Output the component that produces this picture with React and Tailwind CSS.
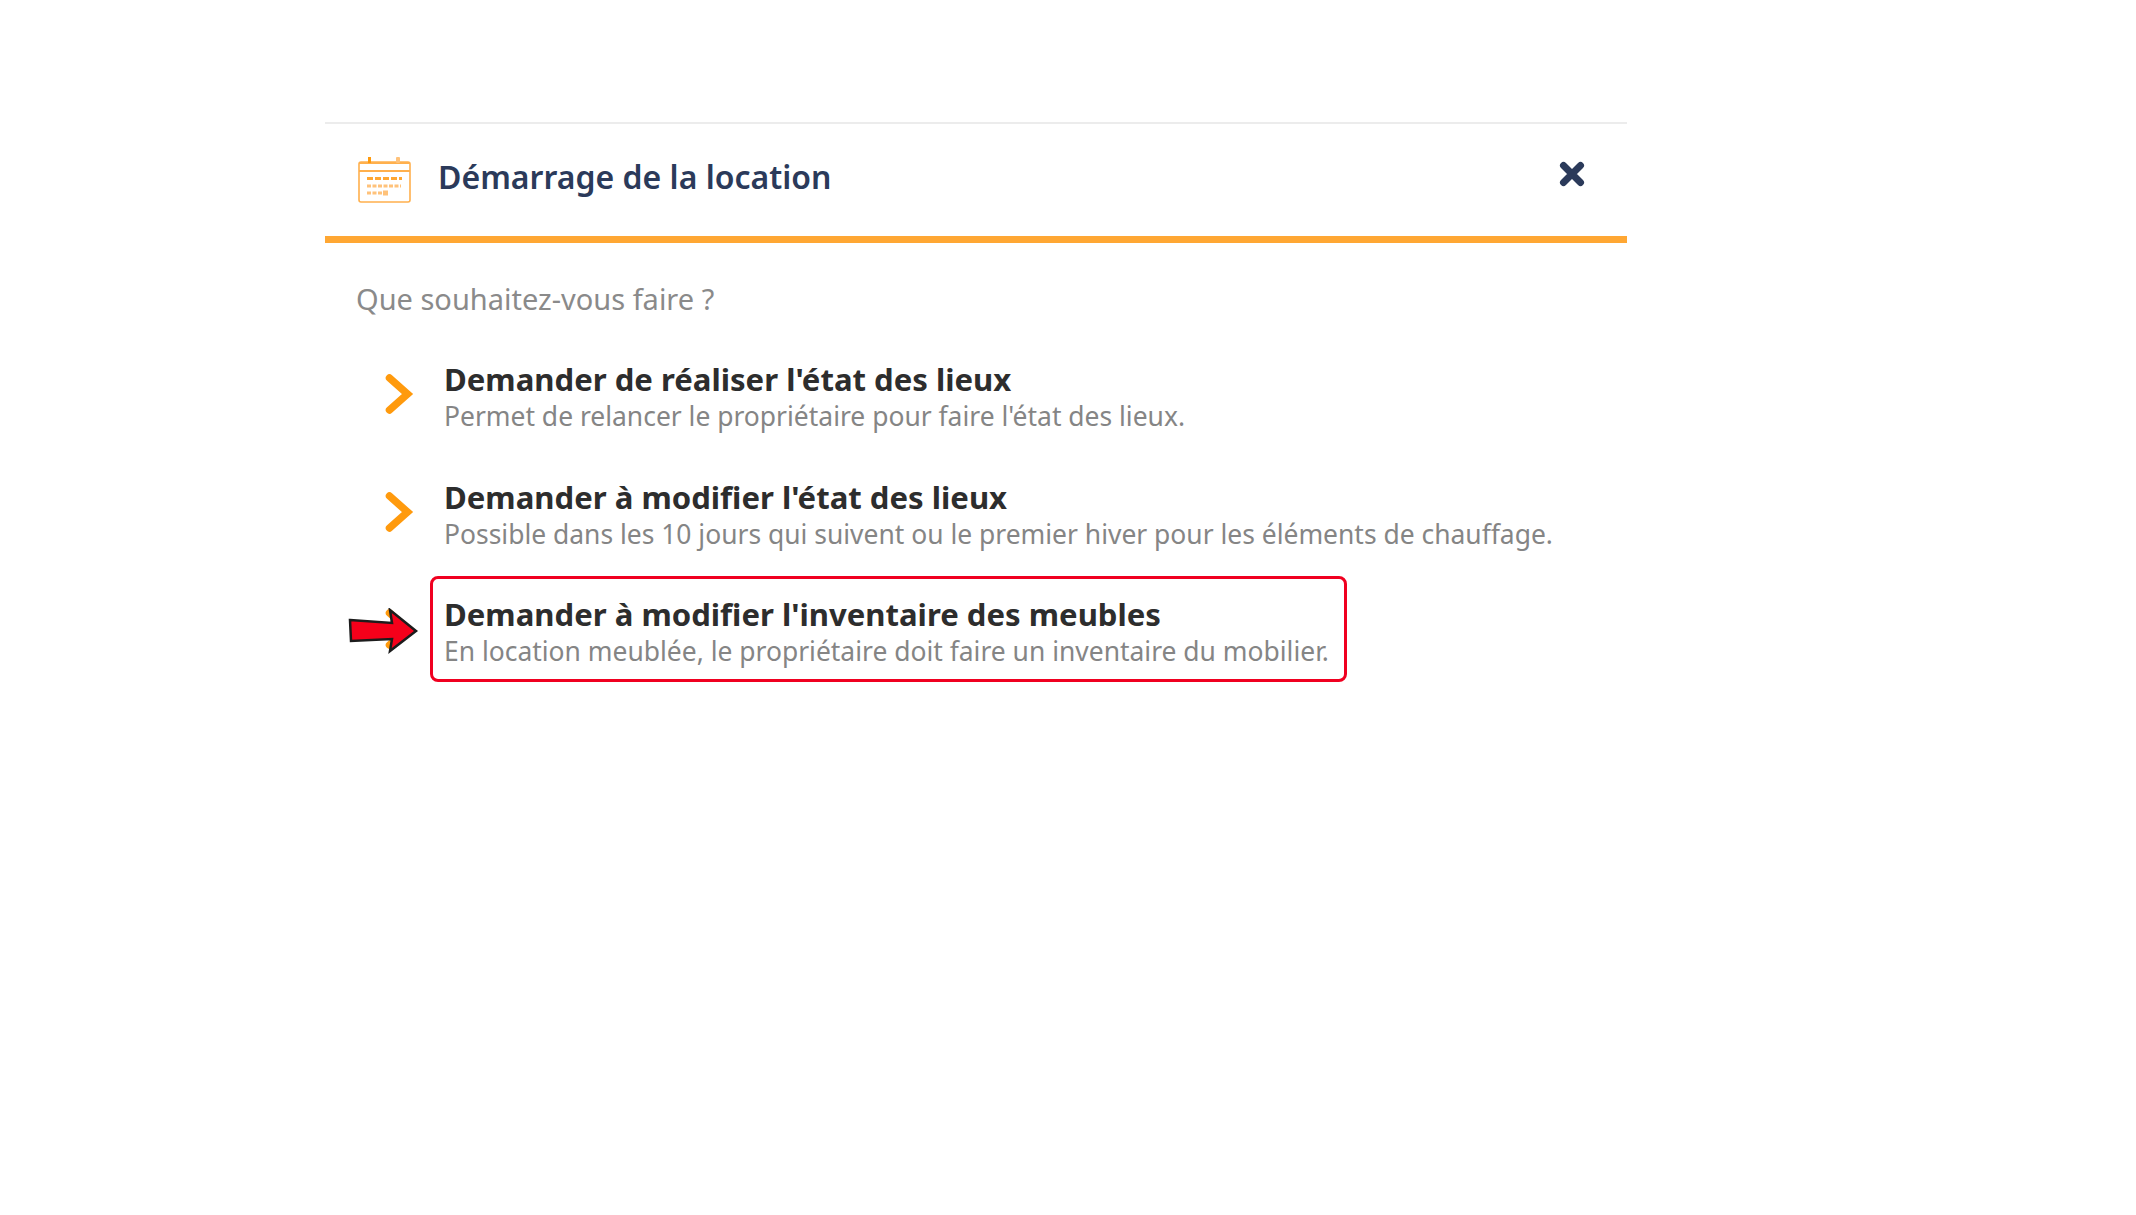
import React from "react";

const font = { fontFamily: '"Noto Sans", sans-serif' };

const Chevron = () => (
  <svg width="30" height="42" viewBox="0 0 30 42" className="shrink-0">
    <path d="M5.5 5 L23.5 21 L5.5 37" fill="none" stroke="#ff9a0d" strokeWidth="7.5" strokeLinejoin="miter" strokeLinecap="round" />
  </svg>
);

const CalendarIcon = () => (
  <svg width="54" height="46" viewBox="0 0 54 46" className="shrink-0">
    <rect x="1" y="5" width="51" height="40" rx="2" fill="#fff" stroke="#ffb04d" strokeWidth="1.6" />
    <path d="M1 14 H52" stroke="#ffb04d" strokeWidth="1.8" />
    <rect x="1" y="5" width="51" height="2" fill="#ffb04d" />
    <rect x="10" y="0" width="3" height="6" fill="#ff9a0d" />
    <rect x="38" y="0" width="4" height="6" rx="1" fill="#ffc27a" />
    <path d="M9 21.5 H44" stroke="#ffa733" strokeWidth="3" strokeDasharray="6 2" />
    <path d="M9 29 H43" stroke="#ffc27a" strokeWidth="3" strokeDasharray="4 1.5" fill="none" />
    <path d="M9 36 H26" stroke="#ffc27a" strokeWidth="3" strokeDasharray="4 1.5" fill="none" />
    <rect x="25" y="33.5" width="5" height="5" fill="#ffc27a" />
  </svg>
);

const CloseIcon = () => (
  <svg width="26" height="26" viewBox="0 0 26 26">
    <path d="M4.5 4.5 L21.5 21.5 M21.5 4.5 L4.5 21.5" stroke="#2b3a5a" strokeWidth="7" strokeLinecap="round" />
  </svg>
);

const RedArrow = () => (
  <svg width="72" height="46" viewBox="0 0 72 46">
    <path d="M2 12 L44 15 L42 2 L68 23 L42 43 L44 31 L3 33 Z" fill="#f5001a" stroke="#1c1c1c" strokeWidth="2.5" strokeLinejoin="miter" />
  </svg>
);

const Option = ({ title, text }) => (
  <div className="flex items-center">
    <div className="w-[56px] flex justify-start mb-[6px]">
      <Chevron />
    </div>
    <div className="pl-[4px]">
      <div className="text-[31.1px] leading-[36px] font-bold text-[#2d2d2d]">{title}</div>
      <div className="mt-[2px] text-[26.45px] leading-[34px] text-[#858585]">{text}</div>
    </div>
  </div>
);

export default function App() {
  return (
    <div className="min-h-screen bg-white pt-[122px] pl-[325px]" style={font}>
      <div className="w-[1302px]">
        <div className="h-[121px] border-t-2 border-b-[7px] border-t-[#ececec] border-b-[#ffa733] flex items-center pl-[33px] pr-[42px]">
          <CalendarIcon />
          <div className="ml-[26px] text-[32px] font-semibold text-[#2b3a5a] leading-none pb-[6px]">
            Démarrage de la location
          </div>
          <div className="ml-auto pb-[12px]">
            <CloseIcon />
          </div>
        </div>
        <div className="pl-[31px] pt-[36px]">
          <div className="text-[29px] leading-[40px] text-[#8a8a8a]">Que souhaitez-vous faire ?</div>
          <div className="pl-[28px] pt-[42px] flex flex-col gap-[46px]">
            <Option
              title="Demander de réaliser l'état des lieux"
              text="Permet de relancer le propriétaire pour faire l'état des lieux."
            />
            <Option
              title="Demander à modifier l'état des lieux"
              text="Possible dans les 10 jours qui suivent ou le premier hiver pour les éléments de chauffage."
            />
            <div className="relative flex items-center -mt-[21px]">
              <div className="w-[56px] flex justify-start">
                <Chevron />
              </div>
              <div className="absolute -left-[36px] top-[32px]">
                <RedArrow />
              </div>
              <div className="border-[3px] border-[#f00020] rounded-[8px] -ml-[10px] pl-[11px] pr-[15px] pt-[17px] pb-[11px]">
                <div className="text-[31.1px] leading-[36px] font-bold text-[#2d2d2d]">
                  Demander à modifier l'inventaire des meubles
                </div>
                <div className="mt-[2px] text-[26.45px] leading-[34px] text-[#858585]">
                  En location meublée, le propriétaire doit faire un inventaire du mobilier.
                </div>
              </div>
            </div>
          </div>
        </div>
      </div>
    </div>
  );
}
